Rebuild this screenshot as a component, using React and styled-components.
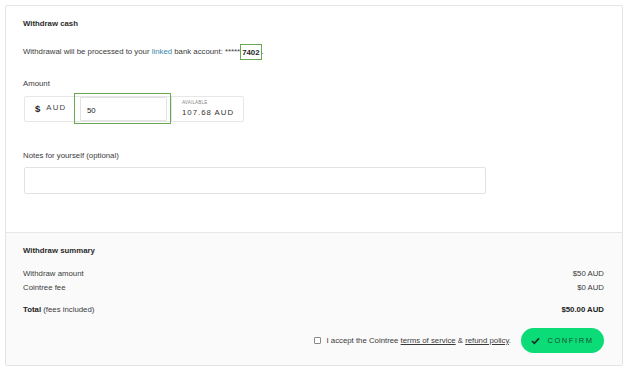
import React from 'react';
import styled, { createGlobalStyle } from 'styled-components';

const GlobalStyle = createGlobalStyle`
  html, body {
    margin: 0;
    padding: 0;
    background: #ffffff;
  }
  body {
    font-family: 'Liberation Sans', Arial, sans-serif;
    font-size: 7.8px;
    line-height: 10px;
    color: #333333;
  }
`;

const Page = styled.div`
  padding: 5px 7px 5px 5px;
`;

const Card = styled.div`
  border: 1px solid #e4e4e4;
  border-radius: 2px;
  overflow: hidden;
`;

const Section = styled.div`
  padding: ${p => p.$pad};
  background: ${p => (p.$muted ? '#fafafa' : '#ffffff')};
  border-top: ${p => (p.$muted ? '1px solid #e8e8e8' : 'none')};
  display: flex;
  flex-direction: column;
`;

const Title = styled.div`
  font-weight: 700;
  color: #2b2b2b;
  height: 10px;
`;

const Text = styled.div`
  margin-top: ${p => p.$mt || 0}px;
  color: #3a3a3a;
  height: 10px;
  display: flex;
  align-items: center;
`;

const LinkWord = styled.span`
  color: #3b86a9;
`;

const Highlight = styled.span`
  display: inline-block;
  font-weight: 700;
  color: #222;
  padding: 3px 1px 2px 1px;
  border: 1px solid #6aa84f;
  line-height: 9px;
`;

const InputGroup = styled.div`
  margin-top: 7px;
  width: 218px;
  height: 24px;
  border: 1px solid #e6e6e6;
  border-radius: 2px;
  display: flex;
  margin-left: 1px;
`;

const Currency = styled.div`
  width: 50px;
  border-right: 1px solid #e6e6e6;
  display: flex;
  align-items: center;
  padding-left: 10px;
  gap: 6px;
  box-sizing: border-box;
`;

const Dollar = styled.span`
  font-weight: 700;
  font-size: 9.5px;
  color: #222;
`;

const Code = styled.span`
  letter-spacing: 1.2px;
  color: #444;
  margin-top: -2px;
`;

const AmountCell = styled.div`
  position: relative;
  width: 96px;
  display: flex;
  padding: 0 4px 0 5px;
  box-sizing: border-box;
`;

const Focus = styled.div`
  position: absolute;
  top: -4px;
  bottom: -3px;
  left: -1px;
  right: 0;
  border: 1px solid #6aa84f;
  pointer-events: none;
`;

const AmountInput = styled.input`
  width: 100%;
  height: 100%;
  box-sizing: border-box;
  border: 1px solid #e2e2e2;
  border-radius: 1px;
  padding: 0 6px;
  font-family: inherit;
  font-size: 7.8px;
  color: #222;
  outline: none;
  padding-top: 2px;
`;

const Available = styled.div`
  flex: 1;
  display: flex;
  flex-direction: column;
  justify-content: center;
  padding-left: 10px;
  border-left: 1px solid #e6e6e6;
`;

const Tiny = styled.span`
  font-size: 4.5px;
  line-height: 6px;
  color: #888;
  letter-spacing: 0.2px;
`;

const Balance = styled.span`
  letter-spacing: 1px;
  color: #333;
  margin-top: 2px;
`;

const Notes = styled.textarea`
  margin-top: 6px;
  margin-left: 1px;
  width: 462px;
  height: 27px;
  box-sizing: border-box;
  border: 1px solid #e2e2e2;
  border-radius: 2px;
  resize: none;
  outline: none;
  font-family: inherit;
`;

const Row = styled.div`
  display: flex;
  justify-content: space-between;
  align-items: center;
  height: 10px;
  margin-top: ${p => p.$mt}px;
  color: #3a3a3a;
`;

const Strong = styled.b`
  font-weight: 700;
  color: #222;
`;

const Footer = styled.div`
  margin-top: 13px;
  display: flex;
  justify-content: flex-end;
  align-items: center;
`;

const Accept = styled.label`
  display: flex;
  align-items: center;
  gap: 4px;
  color: #3a3a3a;
  margin-right: 10px;
`;

const Box = styled.span`
  width: 5px;
  height: 5px;
  border: 1px solid #888;
  border-radius: 1px;
  background: #fff;
  margin-right: 1px;
`;

const Under = styled.span`
  text-decoration: underline;
`;

const Confirm = styled.button`
  width: 83px;
  height: 25px;
  border: none;
  border-radius: 13px;
  background: #0bdc78;
  color: #17502f;
  font-family: inherit;
  font-size: 7.5px;
  letter-spacing: 1.6px;
  font-weight: 400;
  display: flex;
  align-items: center;
  justify-content: center;
  gap: 7px;
  padding: 0;
`;

const Check = () => (
  <svg width="9" height="8" viewBox="0 0 9 8">
    <path d="M1 4 L3.4 6.4 L8 1.4" fill="none" stroke="#1c2a22" strokeWidth="1.6" />
  </svg>
);

export default function App() {
  return (
    <Page>
      <GlobalStyle />
      <Card>
        <Section $pad="13px 18px 38px 17px">
          <Title>Withdraw cash</Title>
          <Text $mt={18}>
            Withdrawal will be processed to your&nbsp;<LinkWord>linked</LinkWord>&nbsp;bank account: *****
            <Highlight>7402</Highlight>.
          </Text>
          <Text $mt={22}>Amount</Text>
          <InputGroup>
            <Currency>
              <Dollar>$</Dollar>
              <Code>AUD</Code>
            </Currency>
            <AmountCell>
              <AmountInput defaultValue="50" />
              <Focus />
            </AmountCell>
            <Available>
              <Tiny>AVAILABLE</Tiny>
              <Balance>107.68 AUD</Balance>
            </Available>
          </InputGroup>
          <Text $mt={29}>Notes for yourself (optional)</Text>
          <Notes />
        </Section>
        <Section $muted $pad="13px 18px 12px 17px">
          <Title>Withdraw summary</Title>
          <Row $mt={13}>
            <span>Withdraw amount</span>
            <span>$50 AUD</span>
          </Row>
          <Row $mt={4}>
            <span>Cointree fee</span>
            <span>$0 AUD</span>
          </Row>
          <Row $mt={12}>
            <span>
              <Strong>Total</Strong> (fees included)
            </span>
            <Strong>$50.00 AUD</Strong>
          </Row>
          <Footer>
            <Accept>
              <Box />
              <span>
                I accept the Cointree <Under>terms of service</Under> &amp; <Under>refund policy</Under>.
              </span>
            </Accept>
            <Confirm>
              <Check />
              CONFIRM
            </Confirm>
          </Footer>
        </Section>
      </Card>
    </Page>
  );
}
